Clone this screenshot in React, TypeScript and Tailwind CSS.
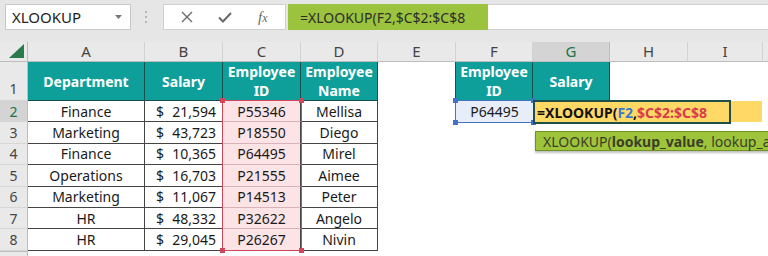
import React from 'react';

const rows = [
  ['Finance', '21,594', 'P55346', 'Mellisa'],
  ['Marketing', '43,723', 'P18550', 'Diego'],
  ['Finance', '10,365', 'P64495', 'Mirel'],
  ['Operations', '16,703', 'P21555', 'Aimee'],
  ['Marketing', '11,067', 'P14513', 'Peter'],
  ['HR', '48,332', 'P32622', 'Angelo'],
  ['HR', '29,045', 'P26267', 'Nivin'],
];

const letters = ['A', 'B', 'C', 'D', 'E', 'F', 'G', 'H', 'I'];

function FormulaBar() {
  return (
    <div className="flex h-[42px] items-start bg-[#e6e6e6] pt-[4px]">
      {/* name box */}
      <div className="ml-[5px] flex h-[26px] w-[126px] items-center justify-between border border-[#c8c8c8] bg-white pl-[6px] pr-[8px]">
        <span className="text-[15px] text-[#222]">XLOOKUP</span>
        <svg width="7" height="4" viewBox="0 0 7 4">
          <polygon points="0,0 7,0 3.5,4" fill="#777" />
        </svg>
      </div>
      <div className="ml-[14px] flex h-[26px] flex-col items-center justify-center gap-[3px]">
        <span className="h-[2px] w-[2px] bg-[#b5b5b5]" />
        <span className="h-[2px] w-[2px] bg-[#b5b5b5]" />
        <span className="h-[2px] w-[2px] bg-[#b5b5b5]" />
      </div>
      {/* cancel / enter / fx */}
      <div className="ml-[16px] flex h-[26px] w-[123px] items-center border border-[#d0d0d0] bg-white">
        <svg className="ml-[17px]" width="12" height="12" viewBox="0 0 12 12">
          <path d="M1 1 L11 11 M11 1 L1 11" stroke="#6a6a6a" strokeWidth="1.4" />
        </svg>
        <svg className="ml-[25px]" width="14" height="11" viewBox="0 0 14 11">
          <path d="M1 5.5 L5 9.5 L13 1" stroke="#6a6a6a" strokeWidth="2" fill="none" />
        </svg>
        <span className="ml-[26px] font-['Liberation_Serif',serif] text-[15px] italic text-[#6a6a6a]">
          f<span className="text-[12px]">x</span>
        </span>
      </div>
      <div className="ml-[2px] flex h-[26px] w-[200px] items-center bg-[#9bc33d] pl-[12px]">
        <span className="text-[14px] text-[#2c2c2c]">=XLOOKUP(F2,$C$2:$C$8</span>
      </div>
      <div className="h-[26px] flex-1 border-y border-[#d0d0d0] bg-white" />
    </div>
  );
}

const teal = 'bg-[#0f9f9b] text-white font-bold border-r border-b border-[#17504d] flex items-center justify-center text-center leading-[19px]';
const rowHead = 'bg-[#e9e9e9] border-r border-[#bdbdbd] border-b border-b-[#d6d6d6] flex items-center justify-center text-[#444]';
const cellA = 'border-r border-b border-[#444] flex items-center justify-center bg-white';

export default function App() {
  return (
    <div className="h-[256px] w-[768px] overflow-hidden bg-white font-['Noto_Sans','Open_Sans',sans-serif] text-[14px] text-[#1a1a1a]">
      <FormulaBar />
      <div className="relative grid h-[214px] grid-cols-[28px_117px_78px_78px_77px_78px_77px_77px_78px_75px_1fr] grid-rows-[20px_39px_repeat(7,21.4px)_1fr]">
        {/* column headers */}
        <div className="flex items-end justify-end border-r border-b border-[#bdbdbd] bg-[#e9e9e9] pb-[3px] pr-[3px]">
          <svg width="15" height="14" viewBox="0 0 15 14">
            <polygon points="15,0 15,14 0,14" fill="#2b7a4b" />
          </svg>
        </div>
        {letters.map((l) => (
          <div
            key={l}
            className={
              l === 'G'
                ? 'flex items-center justify-center border-r border-b border-[#bdbdbd] bg-[#d4d4d4] text-[15px] text-[#217346]'
                : 'flex items-center justify-center border-r border-b border-r-[#d2d2d2] border-b-[#bdbdbd] bg-[#e9e9e9] text-[15px] text-[#444]'
            }
          >
            {l}
          </div>
        ))}
        <div className="border-b border-[#bdbdbd] bg-[#e9e9e9]" />

        {/* row 1 */}
        <div className={rowHead + ' !items-end pb-[1px]'}>1</div>
        <div className={teal}>Department</div>
        <div className={teal}>Salary</div>
        <div className={teal}>
          Employee
          <br />
          ID
        </div>
        <div className={teal}>
          Employee
          <br />
          Name
        </div>
        <div className="border-r border-[#17504d]" />
        <div className={teal}>
          Employee
          <br />
          ID
        </div>
        <div className={teal}>Salary</div>
        <div />
        <div />
        <div />

        {/* data rows */}
        {rows.map((r, i) => (
          <React.Fragment key={i}>
            <div className={i === 0 ? rowHead + ' !bg-[#d4d4d4] text-[#217346]' : rowHead}>{i + 2}</div>
            <div className={cellA}>{r[0]}</div>
            <div className={cellA + ' !justify-between pl-[11px] pr-[6px]'}>
              <span>$</span>
              <span>{r[1]}</span>
            </div>
            <div className="flex items-center justify-center border-r border-b border-[#444] border-b-[#d9b3b8] bg-[#fce4e6]">{r[2]}</div>
            <div className={cellA}>{r[3]}</div>
            {i === 0 ? (
              <>
                <div className="border-r border-[#4472c4]" />
                <div className="flex items-center justify-center bg-[#e7eef9]">P64495</div>
                <div className="bg-[#ffd966]" />
                <div className="bg-[#ffd966]" />
                <div className="mr-[1px] bg-[#ffd966]" />
                <div />
              </>
            ) : (
              <>
                <div />
                <div />
                <div />
                <div />
                <div />
                <div />
              </>
            )}
          </React.Fragment>
        ))}

        {/* row 9 sliver */}
        <div className="border-r border-t border-[#bdbdbd] bg-[#e9e9e9]" />
        <div className="col-span-10" />

        {/* C2:C8 reference range */}
        <div className="pointer-events-none absolute left-[222px] top-[58px] h-[151px] w-[80px] border border-[#d0465a]">
          <span className="absolute -left-[3px] -top-[3px] h-[5px] w-[5px] bg-[#d0465a]" />
          <span className="absolute -right-[3px] -top-[3px] h-[5px] w-[5px] bg-[#d0465a]" />
          <span className="absolute -bottom-[3px] -left-[3px] h-[5px] w-[5px] bg-[#d0465a]" />
          <span className="absolute -bottom-[3px] -right-[3px] h-[5px] w-[5px] bg-[#d0465a]" />
        </div>

        {/* F2 reference */}
        <div className="pointer-events-none absolute left-[455px] top-[58px] h-[23px] w-[79px] border border-[#4472c4]">
          <span className="absolute -left-[3px] -top-[3px] h-[5px] w-[5px] bg-[#4472c4]" />
          <span className="absolute -right-[3px] -top-[3px] h-[5px] w-[5px] bg-[#4472c4]" />
          <span className="absolute -bottom-[3px] -left-[3px] h-[5px] w-[5px] bg-[#4472c4]" />
          <span className="absolute -bottom-[3px] -right-[3px] h-[5px] w-[5px] bg-[#4472c4]" />
        </div>

        {/* in-cell edit box */}
        <div className="absolute left-[533px] top-[58px] flex h-[24px] w-[198px] items-center border-2 border-[#1f4f4a] bg-[#ffd966] pl-[2px] font-bold">
          <span className="text-[#111]">=XLOOKUP(</span>
          <span className="text-[#3a78d0]">F2</span>
          <span className="text-[#111]">,</span>
          <span className="text-[#d83b4b]">$C$2:$C$8</span>
        </div>

        {/* argument tooltip */}
        <div className="absolute left-[535px] top-[89px] flex h-[20px] w-[240px] items-center whitespace-nowrap border border-[#6f9424] bg-[#9ec43c] pl-[7px] text-[14px] text-[#3a3f26] shadow-[0_2px_2px_rgba(0,0,0,0.25)]">
          XLOOKUP(<span className="font-bold">lookup_value</span>, lookup_array
        </div>
      </div>
    </div>
  );
}
